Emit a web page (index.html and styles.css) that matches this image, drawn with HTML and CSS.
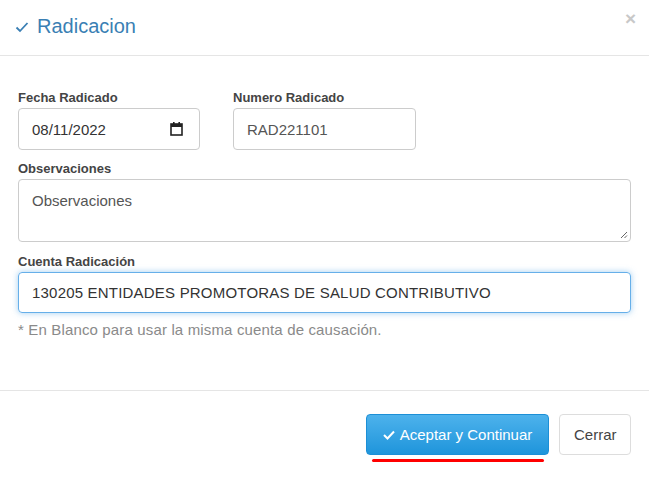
FILE: index.html
```html
<!DOCTYPE html>
<html lang="es">
<head>
    <meta charset="UTF-8">
    <title>Radicacion</title>
    <link rel="stylesheet" href="styles.css">
</head>
<body>
    <div class="modal">
        <div class="modal-header">
            <h4 class="modal-title">
                <svg class="check" width="14" height="12" viewBox="0 0 14 12"><path d="M1.5 6.5 L5 10 L12.5 2" fill="none" stroke="currentColor" stroke-width="1.8"/></svg>
                Radicacion
            </h4>
            <span class="close">&times;</span>
        </div>
        <div class="modal-body">
            <div class="row">
                <div class="field">
                    <label>Fecha Radicado</label>
                    <div class="form-control date">
                        <span>08/11/2022</span>
                        <svg width="13" height="14" viewBox="0 0 13 14"><rect x="1" y="2" width="11" height="11" fill="none" stroke="#222" stroke-width="1.6"/><rect x="1" y="2" width="11" height="3" fill="#222"/><rect x="3" y="0" width="1.6" height="3" fill="#222"/><rect x="8.4" y="0" width="1.6" height="3" fill="#222"/></svg>
                    </div>
                </div>
                <div class="field">
                    <label>Numero Radicado</label>
                    <div class="form-control">RAD221101</div>
                </div>
            </div>
            <label>Observaciones</label>
            <div class="form-control textarea">Observaciones
                <svg class="grip" width="8" height="8" viewBox="0 0 8 8"><path d="M7 1 L1 7 M7 4.5 L4.5 7" stroke="#666" stroke-width="1"/></svg>
            </div>
            <label class="mt">Cuenta Radicación</label>
            <div class="form-control focus">130205 ENTIDADES PROMOTORAS DE SALUD CONTRIBUTIVO</div>
            <p class="help">* En Blanco para usar la misma cuenta de causación.</p>
        </div>
        <div class="modal-footer">
            <div class="btn-wrap">
                <button class="btn btn-primary">
                    <svg width="12" height="10" viewBox="0 0 12 10"><path d="M1 5 L4.5 8.5 L11 1.5" fill="none" stroke="#fff" stroke-width="2"/></svg>
                    Aceptar y Continuar
                </button>
                <span class="underline"></span>
            </div>
            <button class="btn btn-default">Cerrar</button>
        </div>
    </div>
</body>
</html>
```

FILE: styles.css
```css
body {
    margin: 0;
    background: #fff;
    font-family: "Liberation Sans", Arial, sans-serif;
    color: #333;
}

.modal {
    width: 649px;
    height: 490px;
    background: #fff;
}

.modal-header {
    height: 56px;
    border-bottom: 1px solid #e5e5e5;
    display: flex;
    align-items: center;
    justify-content: space-between;
    padding: 0 15px;
    box-sizing: border-box;
}

.modal-title {
    margin: 0;
    font-size: 20px;
    font-weight: normal;
    color: #3a7fb4;
    display: flex;
    align-items: center;
    gap: 8px;
    margin-top: -2px;
}

.close {
    font-size: 19px;
    font-weight: bold;
    color: #c8c8c8;
    margin-top: -18px;
    margin-right: -2px;
}

.modal-body {
    padding: 34px 18px 0;
    height: 335px;
    box-sizing: border-box;
    border-bottom: 1px solid #e5e5e5;
}

.row {
    display: flex;
    gap: 33px;
    margin-bottom: 11px;
}

.field {
    width: 182px;
}

label {
    display: block;
    font-size: 13px;
    font-weight: bold;
    color: #444;
    margin-bottom: 3px;
}

label.mt {
    margin-top: 12px;
}

.form-control {
    height: 42px;
    border: 1px solid #ccc;
    border-radius: 4px;
    padding: 0 13px;
    box-sizing: border-box;
    display: flex;
    align-items: center;
    font-size: 15px;
    color: #555;
}

.field:last-child .form-control {
    width: 183px;
}

.date {
    justify-content: space-between;
    padding-right: 16px;
    color: #333;
}

.textarea {
    height: 63px;
    align-items: flex-start;
    padding-top: 12px;
    position: relative;
}

.grip {
    position: absolute;
    right: 2px;
    bottom: 2px;
}

.focus {
    height: 41px;
    border-color: #66afe9;
    box-shadow: 0 0 6px rgba(102, 175, 233, 0.6);
    color: #333;
    letter-spacing: 0.2px;
}

.help {
    margin: 8px 0 0;
    font-size: 15px;
    letter-spacing: 0.15px;
    color: #8a8a8a;
}

.modal-footer {
    display: flex;
    justify-content: flex-end;
    align-items: flex-start;
    gap: 10px;
    padding: 23px 18px 0;
}

.btn-wrap {
    display: flex;
    flex-direction: column;
    align-items: center;
}

.btn {
    height: 41px;
    border-radius: 4px;
    font-family: "Liberation Sans", Arial, sans-serif;
    font-size: 15px;
    padding: 0 14px;
    cursor: pointer;
}

.btn-primary {
    width: 183px;
    border: 1px solid #1c8fd6;
    background: linear-gradient(#4db2ec, #1f95db);
    color: #fff;
    display: flex;
    align-items: center;
    justify-content: center;
    gap: 5px;
}

.btn-default {
    width: 72px;
    border: 1px solid #ddd;
    background: #fff;
    color: #444;
}

.underline {
    width: 172px;
    height: 3px;
    border-radius: 2px;
    background: #f00;
    margin-top: 4px;
}
```
